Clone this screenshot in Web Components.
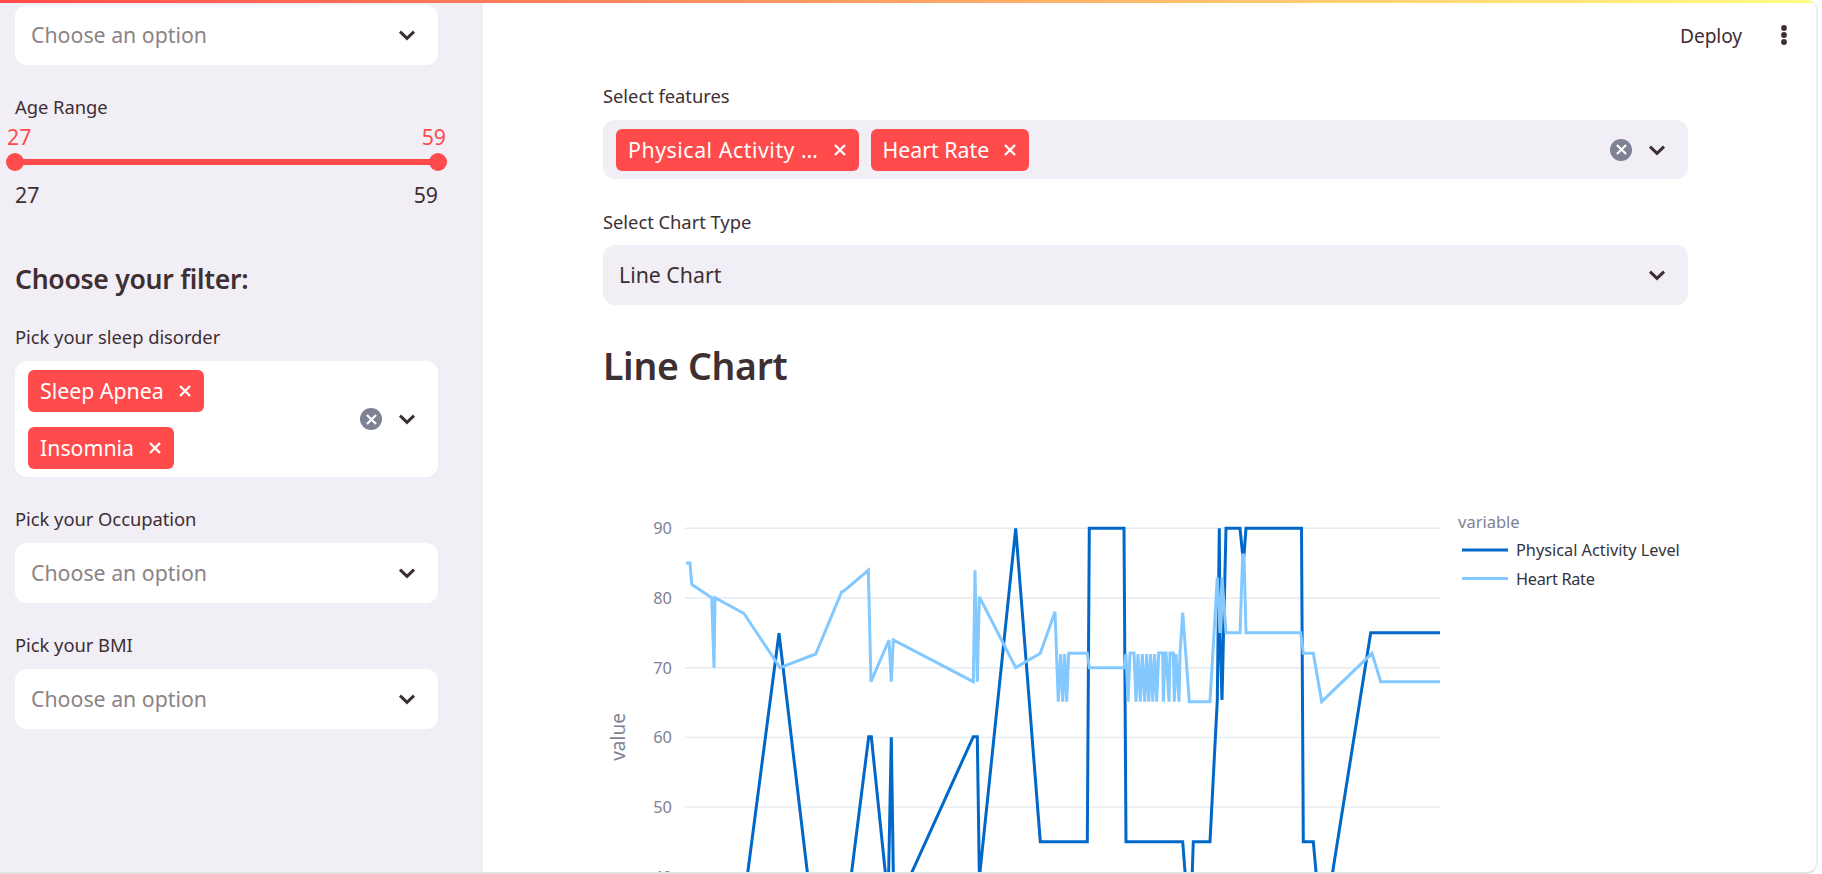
<!DOCTYPE html>
<html lang="en">
<head>
<meta charset="utf-8">
<title>Sleep dashboard</title>
<style>
  html, body { margin: 0; padding: 0; width: 1822px; height: 874px; overflow: hidden; background: #fff; }
  body { font-family: "Noto Sans", sans-serif; color: #3e2f33; }
</style>
</head>
<body>
<st-app>
  <st-sidebar slot="side">
    <st-select placeholder style="margin-top:5px">Choose an option</st-select>
    <st-label style="margin-top:30px">Age Range</st-label>
    <st-slider min="27" max="59"></st-slider>
    <st-subhead>Choose your filter:</st-subhead>
    <st-label style="margin-top:31px">Pick your sleep disorder</st-label>
    <st-select clearable>
      <st-tag>Sleep Apnea</st-tag>
      <st-tag>Insomnia</st-tag>
    </st-select>
    <st-label style="margin-top:30px">Pick your Occupation</st-label>
    <st-select placeholder>Choose an option</st-select>
    <st-label style="margin-top:30px">Pick your BMI</st-label>
    <st-select placeholder>Choose an option</st-select>
  </st-sidebar>
  <st-main slot="main">
    <st-toolbar></st-toolbar>
    <st-label>Select features</st-label>
    <st-select clearable tint row>
      <st-tag style="letter-spacing:.55px">Physical Activity …</st-tag>
      <st-tag>Heart Rate</st-tag>
    </st-select>
    <st-label style="margin-top:31px;margin-bottom:11px">Select Chart Type</st-label>
    <st-select tint>Line Chart</st-select>
    <st-title>Line Chart</st-title>
    <st-chart></st-chart>
  </st-main>
</st-app>

<script>
const CHEVRON = '<svg width="22" height="22" viewBox="0 0 22 22" aria-hidden="true"><path d="M4 7.6 11 14.4l7-6.8" fill="none" stroke="currentColor" stroke-width="3"/></svg>';
const CROSS = (s, w) => `<svg width="${s}" height="${s}" viewBox="0 0 12 12" aria-hidden="true"><path d="M1 1 11 11M11 1 1 11" fill="none" stroke="#fff" stroke-width="${w}"/></svg>`;

function define(name, css, html) {
  customElements.define(name, class extends HTMLElement {
    constructor() {
      super();
      const root = this.attachShadow({ mode: 'open' });
      root.innerHTML = `<style>${css}</style>${typeof html === 'function' ? html(this) : html}`;
    }
  });
}

define('st-app', `
  :host { display: block; box-sizing: border-box; width: 1818px; height: 874px; position: relative; overflow: hidden;
          border-right: 2px solid #efefef; border-bottom: 2px solid #e4e4e4; border-radius: 0 11px 11px 0; background: #fff; }
  .bar { position: absolute; inset: 0 0 auto 0; height: 3px; background: linear-gradient(90deg, #ff4b4b, #fffd80); z-index: 2; }
  .row { display: flex; height: 100%; }
`, `<div class="bar"></div><div class="row"><slot name="side"></slot><slot name="main"></slot></div>`);

define('st-sidebar', `
  :host { display: block; box-sizing: border-box; flex: 0 0 483px; height: 100%; padding: 0 45px 0 15px; background: #f1eef6; }
`, `<slot></slot>`);

define('st-main', `
  :host { display: block; box-sizing: border-box; flex: 1; min-width: 0; height: 100%; padding: 0 128px 0 120px; overflow: hidden; }
`, `<slot></slot>`);

define('st-toolbar', `
  :host { display: flex; justify-content: flex-end; align-items: center; height: 84px; margin-right: -128px; padding: 0 27px 14px 0; box-sizing: border-box; }
  .deploy { font-size: 19.2px; letter-spacing: -.1px; color: #3e2f33; margin-right: 37px; }
  svg { display: block; color: #3e2f33; }
`, `<span class="deploy">Deploy</span><svg width="10" height="24" viewBox="0 0 10 24" aria-hidden="true"><g fill="currentColor"><circle cx="5" cy="5" r="2.9"/><circle cx="5" cy="12" r="2.9"/><circle cx="5" cy="19" r="2.9"/></g></svg>`);

define('st-label', `
  :host { display: block; height: 24px; line-height: 24px; margin-bottom: 12px; font-size: 18.4px; letter-spacing: -.05px; color: #3e2f33; white-space: nowrap; }
`, `<slot></slot>`);

define('st-subhead', `
  :host { display: block; margin-top: 49px; height: 30px; line-height: 30px; font-size: 26.6px; font-weight: 600; letter-spacing: -.3px; color: #3e2f33; white-space: nowrap; }
`, `<slot></slot>`);

define('st-title', `
  :host { display: block; margin-top: 36px; height: 50px; line-height: 50px; font-size: 37.4px; font-weight: 600; letter-spacing: -.3px; color: #3e2f33; white-space: nowrap; }
`, `<slot></slot>`);

define('st-tag', `
  :host { display: inline-flex; align-items: center; box-sizing: border-box; height: 42px; padding: 0 13px 0 12px; gap: 15px; border-radius: 6px; background: #ff4b4b; color: #fff; font-size: 21.3px; white-space: nowrap; }
  span { padding-bottom: 2px; }
  svg { display: block; }
`, `<span><slot></slot></span>` + CROSS(12, 2.3));

define('st-select', `
  :host { display: flex; align-items: center; box-sizing: border-box; min-height: 59px; border-radius: 12px; background: #fff; color: #3e2f33; font-size: 21.3px; }
  :host([tint]) { background: #f1eef6; }
  :host([placeholder]), :host([tint]:not([clearable])) { height: 60px; }
  .value { flex: 1; min-width: 0; padding: 0 0 2px 16px; white-space: nowrap; }
  :host([placeholder]) .value { color: #8b8386; }
  :host([clearable]) .value { padding: 9px 0 8px 13px; display: flex; flex-direction: column; align-items: flex-start; gap: 15px; }
  :host([clearable][row]) .value { flex-direction: row; gap: 12px; }
  .controls { display: flex; align-items: center; gap: 14px; padding-right: 20px; }
  .clear { width: 22px; height: 22px; border-radius: 50%; background: #7f8294; display: flex; align-items: center; justify-content: center; }
  .controls > svg { display: block; }
`, el => `<div class="value"><slot></slot></div><div class="controls">${el.hasAttribute('clearable') ? `<span class="clear">${CROSS(11, 2.3)}</span>` : ''}${CHEVRON}</div>`);

define('st-slider', `
  :host { display: block; height: 95px; font-size: 21.3px; margin-top: -11px; }
  .thumbs { display: flex; justify-content: space-between; margin: 0 -8px; height: 33px; line-height: 33px; color: #ff4b4b; }
  .track { position: relative; height: 6px; background: #ff4b4b; margin-top: 6px; }
  .dot { position: absolute; top: -6px; width: 18px; height: 18px; border-radius: 50%; background: #ff4b4b; }
  .dot.a { left: -9px; } .dot.b { right: -9px; }
  .ends { display: flex; justify-content: space-between; margin-top: 16px; line-height: 28px; color: #3e2f33; }
`, el => {
  const a = el.getAttribute('min'), b = el.getAttribute('max');
  return `<div class="thumbs"><span>${a}</span><span>${b}</span></div><div class="track"><span class="dot a"></span><span class="dot b"></span></div><div class="ends"><span>${a}</span><span>${b}</span></div>`;
});

const HEART = [[686,563],[690,563],[691.7,584.3],[711.7,597.7],[714,667.7],[715,597.7],[742.7,612.7],[744,613.5],[780,667.7],[815.7,654],[841.7,591.7],[844,591],[868.3,570.3],[871,681.7],[889,640],[891.3,681.7],[893.3,640],[973.3,681.7],[975,570.3],[977.3,681.7],[979.3,598],[980,598],[1015.7,667.7],[1040.3,653.3],[1055,611.7],[1058.3,701.7],[1060.7,654],[1062.7,701.7],[1064.7,654],[1066.7,701.7],[1068.7,653.3],[1087.3,653.3],[1089.3,667.7],[1124,667.7],[1126,654],[1128,701.7],[1130,653],[1134,653],[1136,701.7],[1138,654],[1140.3,701.7],[1142.3,654],[1144.7,701.7],[1146.7,654],[1148.7,701.7],[1150.7,654],[1152.7,701.7],[1154.7,654],[1156.7,701.7],[1158.7,653],[1162.7,653],[1163.3,701.7],[1165,653],[1166,653],[1169,701.7],[1170,653],[1173.3,653],[1174.3,701.7],[1176,654],[1179,701.7],[1180,654],[1182.7,612.7],[1189.3,701.7],[1210,701.7],[1217.3,577.3],[1220,633],[1222,577.3],[1226,632.7],[1240,632.7],[1242.7,555],[1244,555],[1246,632.7],[1300.7,632.7],[1303.3,653.3],[1313.3,653.3],[1321.7,701.7],[1372,653.3],[1380.7,681.7],[1440,681.7]];
const ACTIVITY = [[730,947],[738,947],[779,633.3],[816.2,947],[842.2,947],[868.7,736.7],[871.3,736.7],[893,947],[887.2,947],[891.3,737.3],[894.4,947],[878,947],[973.3,736.7],[977.3,736.7],[980.4,947],[972.2,947],[1015.7,528.3],[1040.3,841.7],[1087.3,841.7],[1089.3,528.3],[1124,528.3],[1126,841.7],[1182.7,841.7],[1190.8,947],[1189.8,947],[1193.3,841.7],[1210,841.7],[1217.3,700],[1219.3,528.3],[1220,633],[1222,700],[1226,528.3],[1240,528.3],[1242.7,555],[1244,555],[1246,528.3],[1301.5,528.3],[1303.3,841.7],[1313.3,841.7],[1322.8,947],[1320.7,947],[1370.7,632.7],[1440,632.7]];
const pts = a => a.map(p => p.join(',')).join(' ');
const TICKS = [[90,528.3],[80,598],[70,667.7],[60,737.4],[50,807.1],[40,876.8]];

define('st-chart', `
  :host { display: block; height: 470px; margin-top: 19px; color: #7f8294; }
  svg { display: block; overflow: hidden; font-family: "Noto Sans", sans-serif; }
  .tick { font-size: 16.4px; fill: #7f8294; text-anchor: end; }
  .axis { font-size: 19px; fill: #7f8294; text-anchor: middle; }
  .lg { font-size: 16.3px; fill: #31333f; }
  .lgt { font-size: 16.5px; fill: #7f8294; }
`, `<svg width="1085" height="470" viewBox="603 410 1085 470">
  <g stroke="#e6eaf1" stroke-width="1.4">${TICKS.map(t => `<line x1="685" x2="1440" y1="${t[1]}" y2="${t[1]}"/>`).join('')}</g>
  ${TICKS.map(t => `<text class="tick" x="672" y="${t[1] + 6}">${t[0]}</text>`).join('')}
  <text class="axis" transform="translate(625 737) rotate(-90)">value</text>
  <polyline points="${pts(ACTIVITY)}" fill="none" stroke="#0068c9" stroke-width="3" stroke-linejoin="miter"/>
  <polyline points="${pts(HEART)}" fill="none" stroke="#83c9ff" stroke-width="3" stroke-linejoin="miter"/>
  <text class="lgt" x="1458" y="528">variable</text>
  <line x1="1462" x2="1508" y1="550" y2="550" stroke="#0068c9" stroke-width="3"/>
  <text class="lg" x="1516" y="556">Physical Activity Level</text>
  <line x1="1462" x2="1508" y1="578.5" y2="578.5" stroke="#83c9ff" stroke-width="3"/>
  <text class="lg" x="1516" y="585" letter-spacing="-.3">Heart Rate</text>
</svg>`);
</script>
</body>
</html>
